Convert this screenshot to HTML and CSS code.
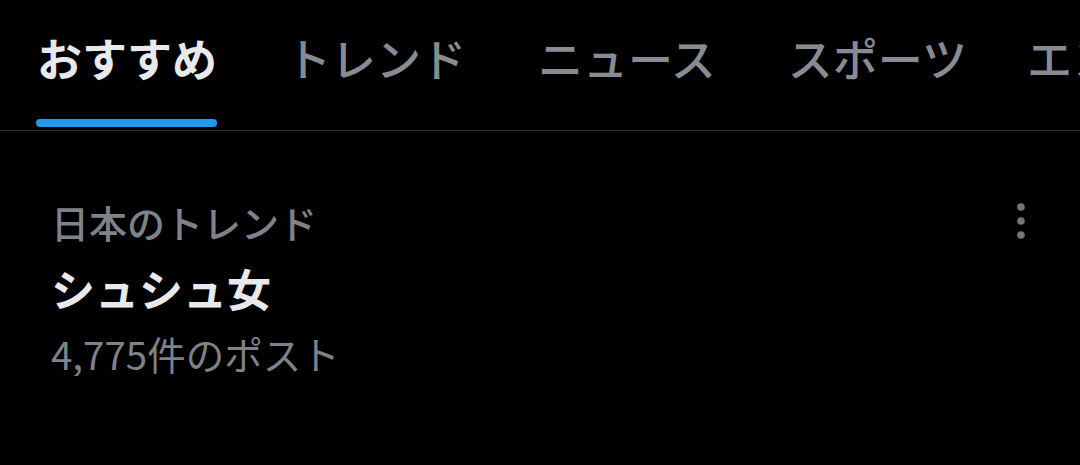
FILE: index.html
```html
<!DOCTYPE html>
<html lang="ja">
<head>
    <meta charset="UTF-8">
    <title>トレンド</title>
    <link rel="stylesheet" href="styles.css">
</head>
<body>
<nav class="tabs">
    <a class="tab active" href="#"><span class="tab-label">おすすめ</span></a>
    <a class="tab" href="#"><span class="tab-label">トレンド</span></a>
    <a class="tab" href="#"><span class="tab-label">ニュース</span></a>
    <a class="tab" href="#"><span class="tab-label">スポーツ</span></a>
    <a class="tab" href="#"><span class="tab-label">エンターテイメント</span></a>
</nav>

<div class="trend">
    <div class="trend-body">
        <div class="trend-meta">日本のトレンド</div>
        <div class="trend-name">シュシュ女</div>
        <div class="trend-count">4,775件のポスト</div>
    </div>
    <button class="more" aria-label="その他">
        <svg width="10" height="40" viewBox="0 0 10 40">
            <circle cx="5" cy="6" r="3.8" fill="#71767b"/>
            <circle cx="5" cy="20" r="3.8" fill="#71767b"/>
            <circle cx="5" cy="34" r="3.8" fill="#71767b"/>
        </svg>
    </button>
</div>
</body>
</html>
```

FILE: styles.css
```css
body {
    margin: 0;
    background: #000;
    font-family: "Noto Sans CJK JP", "Noto Sans", sans-serif;
    color: #e7e9ea;
    overflow: hidden;
}
.tabs {
    display: flex;
    height: 130px;
    border-bottom: 1px solid #2f3336;
    white-space: nowrap;
    overflow: hidden;
}
.tab {
    display: flex;
    flex-direction: column;
    flex-shrink: 0;
    padding: 0 36px 0 36px;
    text-decoration: none;
    color: #878c92;
    font-size: 45px;
    font-weight: 500;
}
.tab-label {
    position: relative;
    line-height: 44px;
    margin-top: 36px;
    height: 94px;
}
.tab.active {
    color: #e7e9ea;
    font-weight: 700;
}
.tab.active .tab-label::after {
    content: "";
    position: absolute;
    left: -1px;
    right: 0;
    bottom: 3px;
    height: 8px;
    border-radius: 4px;
    background: #1d9bf0;
}
.tab:first-child { padding-left: 37px; }
.tab:nth-child(2) { padding-left: 33px; }
.tab:nth-child(4) { padding-right: 24px; }
.trend {
    display: flex;
    justify-content: space-between;
    padding: 68px 54px 0 51px;
}
.trend-meta {
    font-size: 38px;
    line-height: 46px;
    color: #7d8389;
    font-weight: 500;
}
.trend-name {
    font-size: 44px;
    line-height: 52px;
    font-weight: 700;
    margin-top: 17px;
}
.trend-count {
    font-size: 38.5px;
    line-height: 46px;
    color: #7d8389;
    margin-top: 16px;
}
.more {
    background: none;
    border: 0;
    padding: 0;
    height: 40px;
    margin-top: 2px;
}
```
